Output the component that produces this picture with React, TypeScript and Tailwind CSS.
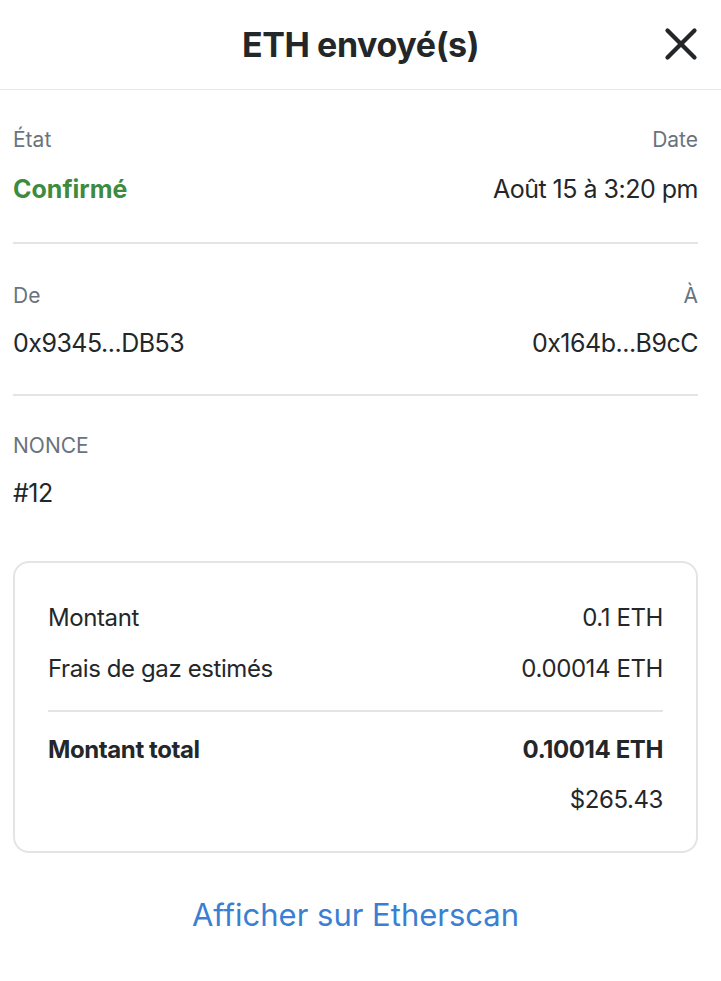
import { X } from "lucide-react";

function Field({ label, value, right, valueClass, gap = "gap-[19px]" }: { label: string; value: string; right?: boolean; valueClass?: string; gap?: string }) {
    return (
        <div className={`flex flex-col ${gap} ${right ? "items-end" : "items-start"}`}>
            <span className="text-[21px] leading-[28px] text-[#6a737d]">{label}</span>
            <span className={`text-[25px] leading-[32px] tracking-[-0.5px] ${valueClass ?? "text-[#24272a]"}`}>{value}</span>
        </div>
    )
}

function Row({ label, value, bold }: { label: string; value: string; bold?: boolean }) {
    return (
        <div className={`flex justify-between text-[24px] leading-[32px] tracking-[-0.4px] text-[#24272a] ${bold ? "font-bold" : ""}`}>
            <span>{label}</span>
            <span>{value}</span>
        </div>
    )
}

export default function App() {
    return (
        <div className="w-[721px] h-[981px] bg-white font-['Inter',sans-serif] text-[#24272a]">
            <div className="relative h-[90px] border-b border-[#e6e6e6] flex items-center justify-center">
                <h1 className="text-[34px] font-bold tracking-[-0.4px]">ETH envoyé(s)</h1>
                <button className="absolute right-[13px] top-[17px] text-[#24272a]">
                    <X size={54} strokeWidth={1.9} />
                </button>
            </div>

            <div className="pl-[13px] pr-[23px]">
                <div className="flex justify-between pt-[36px] pb-[37px] border-b-2 border-[#e4e4e4]">
                    <Field label="État" value="Confirmé" valueClass="text-[#3d8b40] font-bold tracking-[0px]" />
                    <Field label="Date" value="Août 15 à 3:20 pm" right />
                </div>
                <div className="flex justify-between pt-[38px] pb-[35px] border-b-2 border-[#e4e4e4]">
                    <Field label="De" value="0x9345...DB53" gap="gap-[17px]" />
                    <Field label="À" value="0x164b...B9cC" right gap="gap-[17px]" />
                </div>
                <div className="pt-[36px]">
                    <Field label="NONCE" value="#12" gap="gap-[17px]" />
                </div>

                <div className="mt-[52px] rounded-[16px] border-2 border-[#e4e4e4] px-[33px] pt-[39px] pb-[35px]">
                    <div className="flex flex-col gap-[19px]">
                        <Row label="Montant" value="0.1 ETH" />
                        <Row label="Frais de gaz estimés" value="0.00014 ETH" />
                    </div>
                    <div className="h-[2px] bg-[#e4e4e4] mt-[25px] mb-[22px]" />
                    <div className="flex flex-col gap-[18px]">
                        <Row label="Montant total" value="0.10014 ETH" bold />
                        <div className="flex justify-end text-[24px] leading-[32px] tracking-[-0.4px]">$265.43</div>
                    </div>
                </div>

                <div className="flex justify-center mt-[44px]">
                    <a className="text-[31px] leading-[36px] text-[#3b7fd2] cursor-pointer">Afficher sur Etherscan</a>
                </div>
            </div>
        </div>
    )
}
